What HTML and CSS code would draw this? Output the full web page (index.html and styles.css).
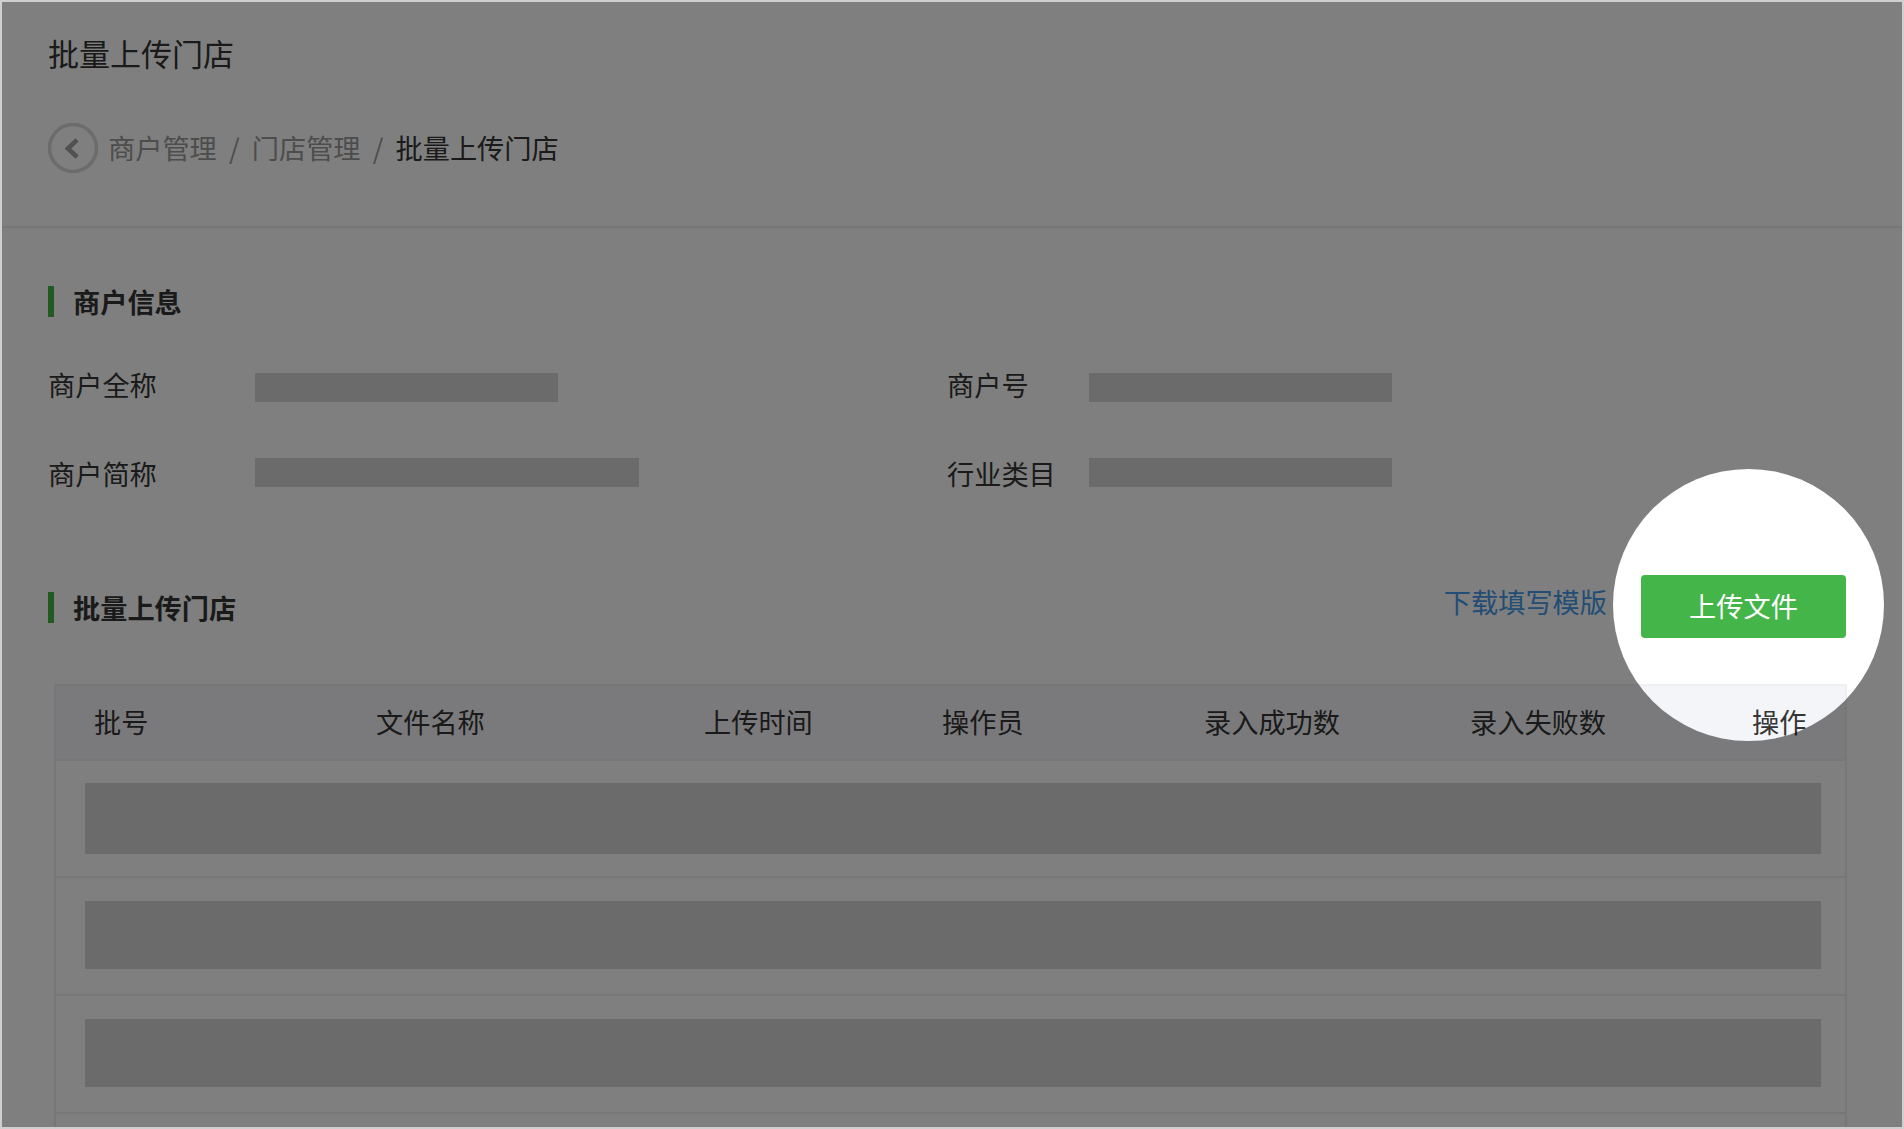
FILE: index.html
```html
<!DOCTYPE html>
<html lang="zh-CN">
<head>
<meta charset="utf-8">
<title>批量上传门店</title>
<link rel="stylesheet" href="styles.css">
</head>
<body>
<div class="frame">
  <header class="top">
    <h1 class="page-title">批量上传门店</h1>
    <nav class="crumbs">
      <svg class="back" viewBox="0 0 49 49" aria-hidden="true">
        <circle cx="24.5" cy="24.5" r="23" fill="none" stroke="#d8d8d8" stroke-width="3.5"/>
        <path d="M28.5 16.5 L19.5 25 L28.5 33.5" fill="none" stroke="#a0a0a0" stroke-width="4.5"/>
      </svg>
      <a class="crumb">商户管理</a><span class="sep">/</span>
      <a class="crumb">门店管理</a><span class="sep">/</span>
      <span class="crumb-now">批量上传门店</span>
    </nav>
  </header>

  <main class="content">
    <h2 class="sec-title sec-first">商户信息</h2>
    <div class="info">
      <span class="label">商户全称</span><span class="mask mask-w303 mask-low"></span>
      <span class="label">商户号</span><span class="mask mask-w303 mask-low"></span>
      <span class="label">商户简称</span><span class="mask mask-w384 mask-high"></span>
      <span class="label">行业类目</span><span class="mask mask-w303 mask-high"></span>
    </div>

    <div class="upload-bar">
      <h2 class="sec-title">批量上传门店</h2>
      <a class="tpl-link">下载填写模版</a>
      <button class="upload-btn">上传文件</button>
    </div>

    <section class="table">
      <div class="thead">
        <span>批号</span><span>文件名称</span><span>上传时间</span><span>操作员</span><span>录入成功数</span><span>录入失败数</span><span>操作</span>
      </div>
      <div class="row row-a"><div class="row-mask row-mask-tall"></div></div>
      <div class="row row-b"><div class="row-mask"></div></div>
      <div class="row row-b"><div class="row-mask"></div></div>
      <div class="row row-b"></div>
    </section>
  </main>

  <div class="dim"><div class="spot"></div></div>
</div>
</body>
</html>
```

FILE: styles.css
```css
* { box-sizing: border-box; }
html, body { margin: 0; height: 100%; }
body {
  overflow: hidden;
  background: #fff;
  color: #353535;
  font-family: "Noto Sans CJK SC", "Liberation Sans", sans-serif;
  font-size: 27.2px;
}
.frame {
  position: relative;
  height: 1129px;
  border: 2px solid #cfcfcf;
  background: #fff;
  overflow: hidden;
}
.top {
  height: 226px;
  padding: 31px 0 0 46px;
  border-bottom: 2px solid #ececec;
}
.page-title {
  margin: 0 0 50px;
  font-size: 31px;
  line-height: 40px;
  font-weight: 400;
}
.crumbs {
  display: flex;
  align-items: center;
  height: 49px;
  line-height: 47px;
}
.back { width: 50px; height: 50px; margin-right: 10px; flex: none; }
.crumb { color: #9a9a9a; }
.sep { color: #9a9a9a; width: 35px; text-align: center; }
.crumb-now { color: #353535; }

.content { padding: 58px 56px 0 46px; }
.sec-title {
  display: flex;
  align-items: center;
  gap: 19px;
  margin: 0;
  height: 31px;
  font-size: 27.2px;
  font-weight: 700;
  line-height: 31px;
}
.sec-title::before {
  content: "";
  width: 6px;
  height: 31px;
  background: #44b549;
}
.info {
  display: grid;
  grid-template-columns: 207px 692px 142px 1fr;
  grid-auto-rows: 40px;
  row-gap: 49px;
  margin-top: 49px;
}
.label { line-height: 36px; }
.mask { height: 29px; background: #d6d6d6; }
.mask-low { margin-top: 7px; }
.mask-high { margin-top: 3px; }
.mask-w303 { width: 303px; }
.mask-w384 { width: 384px; }

.upload-bar {
  display: flex;
  align-items: center;
  height: 63px;
  margin-top: 80px;
}
.upload-bar .sec-title { margin: 2px auto 0 0; }
.tpl-link { color: #459ae9; margin: 0 34px 11px 0; line-height: 40px; }
.upload-btn {
  width: 205px;
  height: 63px;
  padding: 0 0 4px;
  border: 0;
  border-radius: 4px;
  background: #44b549;
  color: #fff;
  font: inherit;
}

.table {
  width: 1793px;
  margin: 46px 0 0 6px;
  border: 2px solid #eeeff1;
  border-bottom: 0;
}
.thead {
  display: grid;
  grid-template-columns: 282px 328px 238px 262px 266px 282px 1fr;
  align-items: center;
  height: 75px;
  padding: 0 0 3px 38px;
  background: #f4f5f9;
  border-bottom: 2px solid #eeeff1;
}
.row {
  padding-left: 29px;
  padding-right: 24px;
  border-bottom: 2px solid #eeeff1;
}
.row-a { height: 117px; padding-top: 22px; }
.row-b { height: 118px; padding-top: 23px; }
.row-mask { height: 68px; background: #d6d6d6; }
.row-mask-tall { height: 71px; }

.dim {
  position: absolute;
  inset: 0;
  overflow: hidden;
  pointer-events: none;
}
.spot {
  position: absolute;
  left: 1611px;
  top: 467px;
  width: 271px;
  height: 272px;
  border-radius: 50%;
  box-shadow: 0 0 0 2400px rgba(0, 0, 0, 0.5);
}
```
